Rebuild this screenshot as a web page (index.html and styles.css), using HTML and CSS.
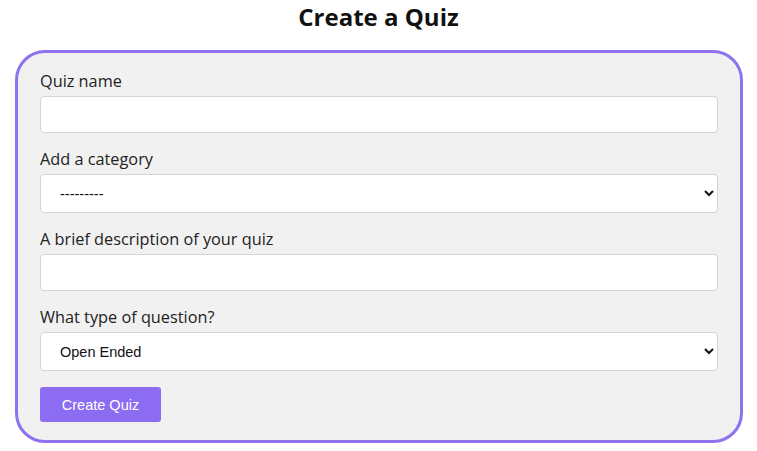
FILE: index.html
```html
<!DOCTYPE html>
<html>
<head>
<meta charset="utf-8">
<link rel="stylesheet" href="styles.css">
</head>
<body>
<h1 class="title">Create a Quiz</h1>
<form class="card">
  <label class="label" for="name">Quiz name</label>
  <input class="field" id="name" type="text">
  <label class="label" for="cat">Add a category</label>
  <select class="field select" id="cat"><option>---------</option></select>
  <label class="label" for="desc">A brief description of your quiz</label>
  <input class="field" id="desc" type="text">
  <label class="label" for="type">What type of question?</label>
  <select class="field select" id="type"><option>Open Ended</option></select>
  <button class="btn" type="button">Create Quiz</button>
</form>
</body>
</html>
```
FILE: styles.css
```css
* { box-sizing: border-box; }
body {
  margin: 0;
  background: #fff;
  font-family: "Open Sans", "Noto Sans", sans-serif;
  color: #222;
}
.title {
  margin: 0;
  padding-top: 4px;
  height: 47px;
  text-align: center;
  font-size: 24px;
  font-weight: 700;
  color: #111;
  line-height: 26px;
}
.card {
  margin: 3px 14px 0 15px;
  border: 3px solid #8e72f0;
  border-radius: 30px;
  background: #f1f1f1;
  padding: 18px 22px 18px 22px;
  display: flex;
  flex-direction: column;
}
.label {
  font-size: 16.3px;
  line-height: 20px;
  margin-bottom: 5px;
  color: #222;
}
.field {
  height: 37px;
  border: 1px solid #d4d4d4;
  border-radius: 4px;
  background: #fff;
  margin-bottom: 16px;
  font-family: "Liberation Sans", Arial, sans-serif;
  font-size: 14.5px;
  padding: 0 10px;
}
.select {
  height: 39px;
  padding-left: 15px;
  color: #111;
}
.btn {
  align-self: flex-start;
  width: 121px;
  height: 35px;
  border: none;
  border-radius: 3px;
  background: #8b6cf2;
  color: #fff;
  font-family: "Liberation Sans", Arial, sans-serif;
  font-size: 14.5px;
}
```
